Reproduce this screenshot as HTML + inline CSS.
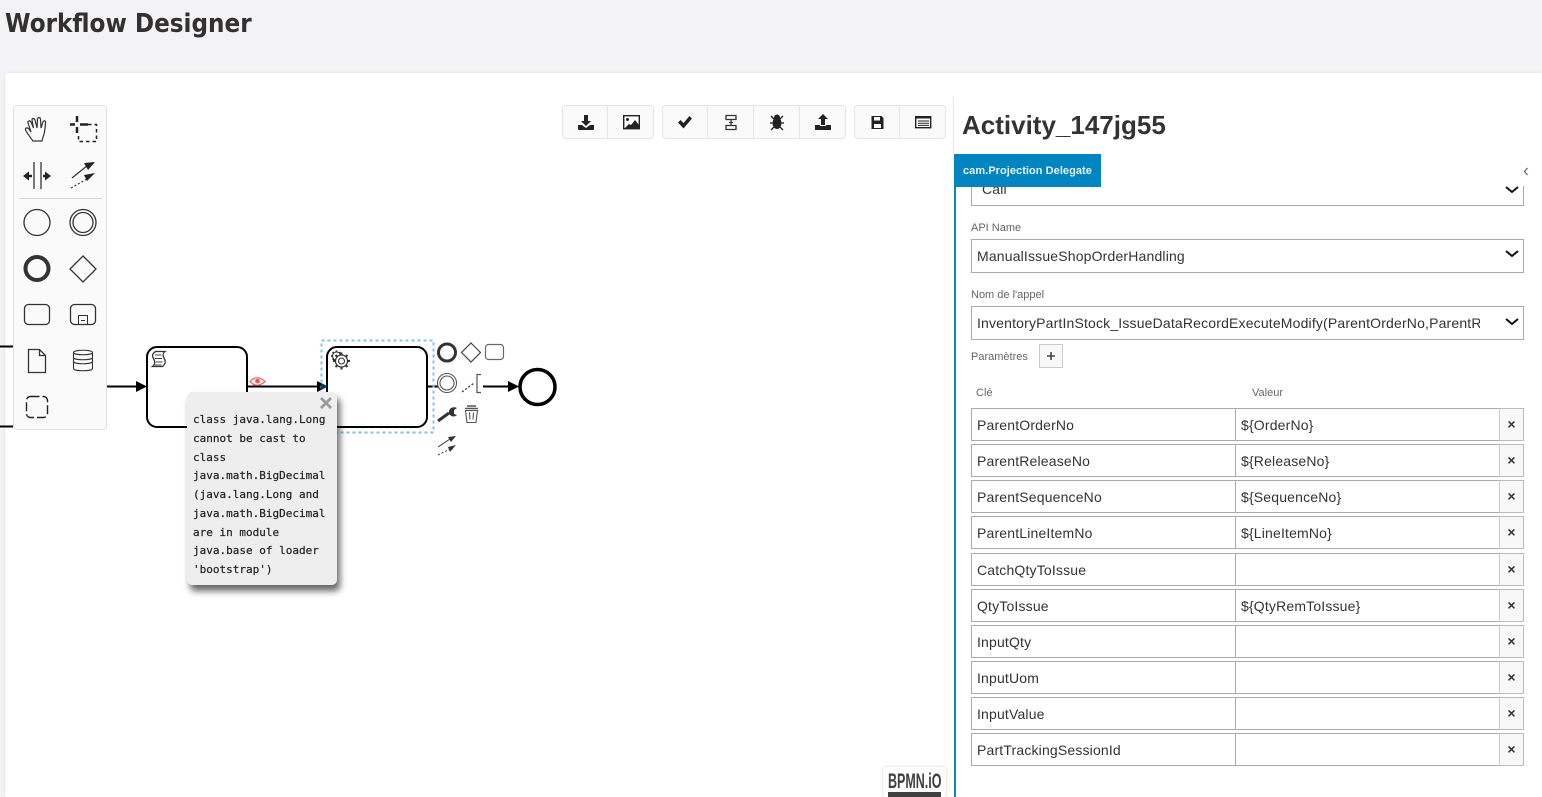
<!DOCTYPE html>
<html><head><meta charset="utf-8"><title>Workflow Designer</title>
<style>
html,body{margin:0;padding:0;width:1542px;height:797px;overflow:hidden;background:#f3f2f5;font-family:"Liberation Sans",sans-serif}
*{box-sizing:border-box}
.a{position:absolute}
h1{position:absolute;margin:0;left:5px;top:7px;font:bold 26px/34px "DejaVu Sans",sans-serif;color:#323130;white-space:nowrap;transform-origin:0 0;transform:scaleX(.89)}
#card{left:5px;top:73px;width:1537px;height:724px;background:#fff;border-radius:3px 0 0 0;box-shadow:0 0 2px rgba(0,0,0,.12)}
.lb{position:absolute;font-size:11px;color:#666;white-space:nowrap;line-height:14px}
.sel{position:absolute;left:971px;width:553px;height:34px;border:1px solid #aaa;background:#fff;font-size:14px;letter-spacing:.17px;color:#333;line-height:32px;padding-left:5px;white-space:nowrap;overflow:hidden}
.cell{position:absolute;height:33px;border:1px solid #aaa;font-size:14px;letter-spacing:.17px;line-height:32px;padding-left:5px;color:#333;background:#fff;white-space:nowrap}
.x{position:absolute;left:1499px;width:25px;height:33px;border:1px solid #bbb;border-left:1px solid #ccc;background:#f8f8f8;color:#333;font-weight:bold;font-size:14px;line-height:31px;text-align:center}
.g{position:absolute;top:105px;height:34px;border:1px solid #e6e6e6;border-radius:4px;background:#fafafa}
.d{position:absolute;top:105px;width:1px;height:34px;background:#e4e4e4}
#tip{left:187px;top:392px;width:150px;height:193px;background:#eee;border-radius:5px;box-shadow:3px 6px 7px rgba(0,0,0,.6);font:11px/18.75px "DejaVu Sans Mono","Liberation Mono",monospace;color:#222;-webkit-text-stroke:.2px #222;padding:19px 0 0 6px;white-space:pre}
</style></head><body>
<h1>Workflow Designer</h1>
<div id="card" class="a"></div>

<svg class="a" style="left:0;top:0" width="954" height="797" viewBox="0 0 954 797" fill="none">
<!-- palette -->
<rect x="13.500" y="105.500" width="93" height="324" rx="3" fill="#fafafa" stroke="#e2e2e2"/>
<path d="M19 198.500H102" stroke="#d5d5d5"/>
<path d="M0 346.500H13M0 426.500H13" stroke="#000" stroke-width="2"/>
<!-- hand -->
<path d="M33 141C30 137 27 133 25.500 130C25 128 27 127 29 129L31 132L28 123C27.500 121 30 120 31 122L33.500 128L32 120C32 118 34.500 118 35 120L37 128L37.500 119C38 117 40 117 40.500 119L41 128L43 122C43.500 120 46 120.500 45.500 123C45 128 45 133 43 137L42 141Z" stroke="#333" stroke-width="1.200" fill="#fafafa"/>
<!-- lasso -->
<path d="M77 116v6M77 127v6M70 124.500h5M80 124.500h8" stroke="#222" stroke-width="2.500"/>
<path d="M88 124.500H96.500V141.500H78.500V133" stroke="#222" stroke-width="1.500" stroke-dasharray="3.500 3"/>
<!-- space -->
<path d="M34 162v27M41 162v27" stroke="#333" stroke-width="1.300"/>
<path d="M23 176l6-4.500v9zM51 176l-6-4.500v9z" fill="#222"/><path d="M28 176h4M43 176h4" stroke="#222" stroke-width="2.500"/>
<!-- connect -->
<path d="M72 178l16-13" stroke="#333" stroke-width="1.200"/><path d="M95 162l-11 1 4 7z" fill="#222"/>
<path d="M71 188l16-9" stroke="#333" stroke-width="1.200" stroke-dasharray="2 2"/><path d="M95 173l-11 2 3 6z" fill="#222"/>
<!-- shapes -->
<circle cx="37" cy="222.500" r="13" stroke="#333" stroke-width="1.300"/>
<circle cx="83" cy="222.500" r="13" stroke="#333" stroke-width="1.300"/><circle cx="83" cy="222.500" r="10" stroke="#333" stroke-width="1.300"/>
<circle cx="37" cy="268.500" r="11.500" stroke="#333" stroke-width="4"/>
<path d="M83 256l13 13-13 13-13-13z" stroke="#333" stroke-width="1.300"/>
<rect x="24.500" y="304.500" width="25" height="20" rx="4" stroke="#333" stroke-width="1.300"/>
<rect x="70.500" y="304.500" width="25" height="20" rx="4" stroke="#333" stroke-width="1.300"/>
<rect x="78.500" y="315.500" width="9" height="9" stroke="#333"/><path d="M81 320.500h4" stroke="#333"/>
<path d="M28.500 349.500h11l6 6v17h-17zM39.500 349.500v6h6" stroke="#333" stroke-width="1.300"/>
<path d="M73.500 352.500c0-3 19-3 19 0v16c0 3-19 3-19 0zM73.500 352.500c0 3 19 3 19 0M73.500 357.500c0 3 19 3 19 0M73.500 361.500c0 3 19 3 19 0" stroke="#333" stroke-width="1.100"/>
<rect x="26.500" y="396.500" width="21" height="21" rx="4" stroke="#222" stroke-width="1.400" stroke-dasharray="9 3"/>

<!-- connections -->
<path d="M107 386.500h30M248 386.500h70M428 386.500h12M483 386.500h26" stroke="#000" stroke-width="2"/>
<path d="M147 386.500l-11-5.500v11zM328 386.500l-11-5.500v11zM519 386.500l-11-5.500v11z" fill="#000"/>
<!-- tasks -->
<rect x="147" y="347" width="100" height="80" rx="10" fill="#fff" stroke="#000" stroke-width="2"/>
<rect x="327" y="347" width="100" height="80" rx="10" fill="#fff" stroke="#000" stroke-width="2"/>
<rect x="321.500" y="340.500" width="112" height="92" stroke="#86c2ea" stroke-width="2" stroke-dasharray="3 3"/>
<path d="M328 386.500l-7-3.500v7z" fill="#0b3a5c"/>
<!-- script icon -->
<path d="M155 351.500h10c-2.500 2-2.500 4-.8 7c1.800 3 1 6-1.700 8h-10c2.700-2 2.700-5 1-8c-1.800-3-1-5.500 2.500-7z" fill="#fff" stroke="#333" stroke-width="1.300"/>
<path d="M155 355h6.500M155 358.500h7M156 362h6.500M155 365h6.500" stroke="#444" stroke-width="1"/>
<!-- gears -->
<g stroke="#333">
<path d="M336.500 350.500v11M331 356h11M332.600 352.100l7.800 7.800M340.400 352.100l-7.800 7.800" stroke-width="1.800"/>
<circle cx="336.500" cy="356" r="4" fill="#fff" stroke-width="1.100"/>
<path d="M341.500 352.500v17M333 361h17M335.500 355l12 12M347.500 355l-12 12" stroke-width="2"/>
<circle cx="341.500" cy="361" r="6" fill="#fff" stroke-width="1.200"/>
<circle cx="341.500" cy="361" r="3" fill="#fff" stroke-width="1.100"/>
</g>
<!-- eye -->
<path d="M250 381.500c4-5 10-5 15 0-5 5-11 5-15 0z" stroke="#ee5a52" stroke-width="1.100" fill="#fde8e6"/><circle cx="257.500" cy="381" r="2.300" fill="#ee5a52"/>
<!-- end event -->
<circle cx="537.500" cy="387" r="17.500" fill="#fff" stroke="#000" stroke-width="3.500"/>
<!-- context pad -->
<circle cx="447" cy="352.500" r="8.500" fill="#fff" stroke="#333" stroke-width="3"/>
<path d="M471 343l9.500 9.500-9.500 9.500-9.500-9.500z" stroke="#444" stroke-width="1.200" fill="#fff"/>
<rect x="485.500" y="344.500" width="18" height="15" rx="3" stroke="#666" stroke-width="1.200" fill="#fff"/>
<circle cx="447" cy="383" r="9.500" fill="#fff" stroke="#555" stroke-width="1.100"/><circle cx="447" cy="383" r="7" stroke="#555" stroke-width="1.100"/>
<path d="M462 392l12-9" stroke="#333" stroke-width="1.300" stroke-dasharray="2 2"/>
<path d="M481 374.500h-4v18h4" stroke="#555" stroke-width="1.200"/>
<path d="M438 421l11-8" stroke="#333" stroke-width="3"/><path d="M457 408c-4-2-8 0-8 4s5 6 8 3l-3-1v-4z" fill="#333"/>
<path d="M465 408.500h13M467 406h9" stroke="#555" stroke-width="1.400"/><path d="M465.500 410.500l1.500 12h9l1.500-12zM469.500 412.500l.5 7M473.500 412.500l-.5 7" stroke="#555" stroke-width="1.100" fill="#fff"/>
<path d="M438 447l12-8" stroke="#333" stroke-width="1"/><path d="M456 436l-8 1 3 5z" fill="#333"/>
<path d="M438 455l12-6" stroke="#333" stroke-width="1" stroke-dasharray="2 2"/><path d="M456 445l-8 2 2 5z" fill="#333"/>
</svg>

<!-- tooltip -->
<div id="tip" class="a">class java.lang.Long
cannot be cast to
class
java.math.BigDecimal
(java.lang.Long and
java.math.BigDecimal
are in module
java.base of loader
'bootstrap')</div>
<svg class="a" style="left:320px;top:397px" width="12" height="12"><path d="M1 1l10 10M11 1L1 11" stroke="#999" stroke-width="2.800"/></svg>

<!-- toolbar -->
<div class="g" style="left:562px;width:92px"></div><div class="d" style="left:607px"></div>
<div class="g" style="left:662px;width:184px"></div><div class="d" style="left:707px"></div><div class="d" style="left:753px"></div><div class="d" style="left:799px"></div>
<div class="g" style="left:854px;width:92px"></div><div class="d" style="left:899px"></div>
<svg class="a" style="left:560px;top:100px" width="390" height="45" viewBox="560 100 390 45">
<path d="M584 115h4v6h3l-5 5-5-5h3z" fill="#222"/><path d="M578 125h4l4 3 4-3h4v4a1 1 0 0 1-1 1h-14a1 1 0 0 1-1-1z" fill="#222"/>
<rect x="623.700" y="115.700" width="15.600" height="13" stroke="#222" stroke-width="1.400" fill="#fff"/><circle cx="627.500" cy="119.500" r="1.500" fill="#222"/><path d="M625 128l4-4 2 1 4-5 4 5v3z" fill="#222"/>
<path d="M678 122.500l2.500-2.500 3 3 6-7 2.500 2.500-8.500 10z" fill="#222"/>
<path d="M726 115.500h10v4h-10zM726 125.500h10v4h-10zM731 119.500v6" stroke="#333" stroke-width="1.300" fill="none"/><path d="M729 122.500h4" stroke="#333"/>
<ellipse cx="777" cy="123" rx="4.500" ry="6" fill="#222"/><circle cx="777" cy="117.500" r="3" fill="#222"/><path d="M771 116l3 3M783 116l-3 3M770 123h14M771 130l3-3M783 130l-3-3" stroke="#222" stroke-width="1.300"/>
<path d="M823 114l5 5h-3v6h-4v-6h-3z" fill="#222"/><path d="M815 125h5v1h6v-1h5v5h-16z" fill="#222"/>
<path d="M871.500 116h10l2 2v11h-12z" fill="#222"/><rect x="874" y="117" width="6" height="3.500" fill="#fff"/><rect x="874" y="124" width="7" height="4" fill="#fff"/>
<rect x="915.700" y="116.700" width="15" height="11" fill="#fff" stroke="#222" stroke-width="1.400"/><path d="M916 117.500h15" stroke="#222" stroke-width="2"/><path d="M918 121h11M918 123.200h11M918 125.400h11" stroke="#222"/>
</svg>

<!-- BPMN logo -->
<div class="a" style="left:883px;top:767px;width:63px;height:30px;background:#fff;border-radius:3px;box-shadow:0 0 3px rgba(0,0,0,.18)"></div>
<div class="a" style="left:888px;top:772px;font:bold 21px/20px 'Liberation Sans',sans-serif;color:#404040;white-space:nowrap;transform-origin:0 0;transform:scaleX(.595)">BPMN.iO</div>
<div class="a" style="left:888px;top:792px;width:53px;height:5px;background:#404040"></div>

<!-- right panel -->
<div class="a" style="left:953px;top:97px;width:1px;height:57px;background:#e8e8e8"></div>
<div class="a" style="left:954px;top:187px;width:2px;height:610px;background:#0c85bd"></div>
<div class="a" style="left:962px;top:107px;font:bold 26px/36px 'Liberation Sans',sans-serif;color:#333;white-space:nowrap">Activity_147jg55</div>

<div class="sel" style="top:172px;padding-left:10px">Call</div>
<div class="a" style="left:1101px;top:150px;width:441px;height:36px;background:#fff"></div>
<div class="a" style="left:954px;top:154px;width:147px;height:33px;background:#0085c0;color:#e6f5ff;font:bold 11px/34px 'Liberation Sans',sans-serif;letter-spacing:.05px;padding-left:9px;white-space:nowrap">cam.Projection Delegate</div>
<svg class="a" style="left:1523px;top:167px" width="6" height="9" fill="none"><path d="M4.500 1L1.500 4.500l3 3.500" stroke="#667" stroke-width="1.300"/></svg>

<div class="lb" style="left:971px;top:221px">API Name</div>
<div class="sel" style="top:239px">ManualIssueShopOrderHandling</div>
<div class="lb" style="left:971px;top:288px">Nom de l'appel</div>
<div class="sel" style="top:306px"><span style="display:block;width:503px;overflow:hidden">InventoryPartInStock_IssueDataRecordExecuteModify(ParentOrderNo,ParentReleaseNo)</span></div>
<svg class="a" style="left:1505px;top:186px" width="14" height="8" fill="none"><path d="M1 1l6 5 6-5" stroke="#111" stroke-width="2"/></svg>
<svg class="a" style="left:1505px;top:250px" width="14" height="8" fill="none"><path d="M1 1l6 5 6-5" stroke="#111" stroke-width="2"/></svg>
<svg class="a" style="left:1505px;top:318px" width="14" height="8" fill="none"><path d="M1 1l6 5 6-5" stroke="#111" stroke-width="2"/></svg>
<div class="lb" style="left:971px;top:350px">Paramètres</div>
<div class="a" style="left:1039px;top:344px;width:24px;height:24px;border:1px solid #ccc;background:#f8f8f8"></div>
<svg class="a" style="left:1046px;top:351px" width="10" height="10"><path d="M5 1v8M1 5h8" stroke="#444" stroke-width="1.600"/></svg>
<div class="lb" style="left:976px;top:386px">Clé</div>
<div class="lb" style="left:1252px;top:386px">Valeur</div>

<div class="cell" style="left:971px;top:408px;width:265px">ParentOrderNo</div><div class="cell" style="left:1235px;top:408px;width:265px">${OrderNo}</div><div class="x" style="top:408px">×</div>
<div class="cell" style="left:971px;top:444px;width:265px">ParentReleaseNo</div><div class="cell" style="left:1235px;top:444px;width:265px">${ReleaseNo}</div><div class="x" style="top:444px">×</div>
<div class="cell" style="left:971px;top:480px;width:265px">ParentSequenceNo</div><div class="cell" style="left:1235px;top:480px;width:265px">${SequenceNo}</div><div class="x" style="top:480px">×</div>
<div class="cell" style="left:971px;top:516px;width:265px">ParentLineItemNo</div><div class="cell" style="left:1235px;top:516px;width:265px">${LineItemNo}</div><div class="x" style="top:516px">×</div>
<div class="cell" style="left:971px;top:553px;width:265px">CatchQtyToIssue</div><div class="cell" style="left:1235px;top:553px;width:265px"></div><div class="x" style="top:553px">×</div>
<div class="cell" style="left:971px;top:589px;width:265px">QtyToIssue</div><div class="cell" style="left:1235px;top:589px;width:265px">${QtyRemToIssue}</div><div class="x" style="top:589px">×</div>
<div class="cell" style="left:971px;top:625px;width:265px">InputQty</div><div class="cell" style="left:1235px;top:625px;width:265px"></div><div class="x" style="top:625px">×</div>
<div class="cell" style="left:971px;top:661px;width:265px">InputUom</div><div class="cell" style="left:1235px;top:661px;width:265px"></div><div class="x" style="top:661px">×</div>
<div class="cell" style="left:971px;top:697px;width:265px">InputValue</div><div class="cell" style="left:1235px;top:697px;width:265px"></div><div class="x" style="top:697px">×</div>
<div class="cell" style="left:971px;top:733px;width:265px">PartTrackingSessionId</div><div class="cell" style="left:1235px;top:733px;width:265px"></div><div class="x" style="top:733px">×</div>
</body></html>
